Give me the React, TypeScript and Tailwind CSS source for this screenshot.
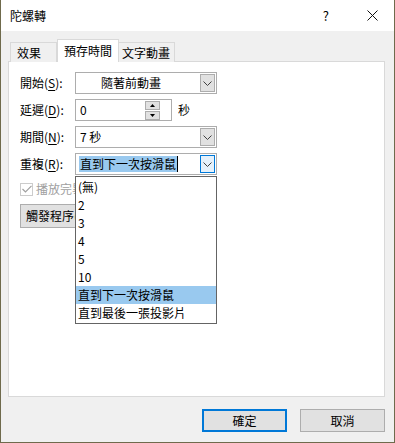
import { ReactNode } from "react";

const font = { fontFamily: '"Noto Sans CJK TC", "Microsoft JhengHei", sans-serif' };

function Chevron({ color = "#404040" }: { color?: string }) {
    return (
        <svg width="9" height="5" viewBox="0 0 9 5">
            <path d="M0.5 0.5 L4.5 4.5 L8.5 0.5" fill="none" stroke={color} strokeWidth="1" />
        </svg>
    );
}

function Label({ text, hot }: { text: string, hot: string }) {
    return (
        <div className="w-[55px] shrink-0 text-[12px] leading-none text-black">
            {text}(<span className="underline underline-offset-2">{hot}</span>):
        </div>
    );
}

function Select({ children, focus }: { children: ReactNode, focus?: boolean }) {
    return (
        <div className="flex items-center w-[142px] h-[22px] border border-[#adadad] bg-white">
            <div className="grow flex items-center h-full overflow-hidden">{children}</div>
            <div
                className={`flex items-center justify-center w-[15px] h-[18px] mr-[1px] border ${focus ? "border-[#0078d7] bg-[#e5f1fb]" : "border-[#adadad] bg-[#e1e1e1]"}`}
            >
                <Chevron />
            </div>
        </div>
    );
}

export default function App() {
    const items = ["(無)", "2", "3", "4", "5", "10", "直到下一次按滑鼠", "直到最後一張投影片"];

    return (
        <div style={font} className="w-[395px] h-[443px] flex flex-col bg-[#f0f0f0] border-x border-b border-[#6f6a4c] overflow-hidden">
            <div className="flex items-center h-[31px] shrink-0 bg-white pl-[9px]">
                <div className="text-[12px] text-black">陀螺轉</div>
                <div className="ml-auto text-[13px] text-black mr-[38px]">?</div>
                <div className="mr-[16px]">
                    <svg width="11" height="11" viewBox="0 0 11 11">
                        <path d="M0.5 0.5 L10.5 10.5 M10.5 0.5 L0.5 10.5" stroke="#111" strokeWidth="1" />
                    </svg>
                </div>
            </div>

            <div className="flex flex-col pl-[7px] pr-[9px] pt-[8px]">
                <div className="flex items-end h-[23px] pl-[2px] -mb-px relative z-10">
                    <div className="flex items-center w-[47px] h-[20px] pl-[6px] bg-[#f0f0f0] border border-b-0 border-[#d9d9d9] text-[12px] text-black">
                        效果
                    </div>
                    <div className="flex items-center w-[62px] h-[23px] pl-[6px] bg-white border border-b-0 border-[#d9d9d9] text-[12px] text-black">
                        預存時間
                    </div>
                    <div className="flex items-center w-[56px] h-[20px] pl-[3px] bg-[#f0f0f0] border border-b-0 border-l-0 border-[#d9d9d9] text-[12px] text-black">
                        文字動畫
                    </div>
                </div>

                <div className="relative h-[336px] bg-white border border-[#d9d9d9] pt-[10px] pl-[11px]">
                    <div className="flex flex-col gap-[5px]">
                        <div className="flex items-center">
                            <Label text="開始" hot="S" />
                            <Select>
                                <span className="pl-[25px] text-[12px] text-black">隨著前動畫</span>
                            </Select>
                        </div>
                        <div className="flex items-center">
                            <Label text="延遲" hot="D" />
                            <div className="flex items-center w-[97px] h-[22px] border border-[#adadad] bg-white">
                                <span className="grow pl-[4px] text-[12px] text-black">0</span>
                                <div className="flex flex-col gap-[1px] mr-[11px]">
                                    <div className="flex items-center justify-center w-[15px] h-[9px] border border-[#adadad] bg-[#e1e1e1]">
                                        <svg width="5" height="3" viewBox="0 0 5 3"><path d="M2.5 0 L5 3 L0 3 Z" fill="#000" /></svg>
                                    </div>
                                    <div className="flex items-center justify-center w-[15px] h-[9px] border border-[#adadad] bg-[#e1e1e1]">
                                        <svg width="5" height="3" viewBox="0 0 5 3"><path d="M0 0 L5 0 L2.5 3 Z" fill="#000" /></svg>
                                    </div>
                                </div>
                            </div>
                            <span className="ml-[6px] text-[12px] text-black">秒</span>
                        </div>
                        <div className="flex items-center">
                            <Label text="期間" hot="N" />
                            <Select>
                                <span className="pl-[4px] text-[12px] text-black">7 秒</span>
                            </Select>
                        </div>
                        <div className="flex items-center">
                            <Label text="重複" hot="R" />
                            <Select focus>
                                <span className="ml-[3px] px-[1px] bg-[#99c9ef] text-[12px] leading-[16px] text-black">直到下一次按滑鼠</span>
                                <span className="w-px h-[16px] bg-black" />
                            </Select>
                        </div>
                    </div>

                    <div className="flex items-center gap-[3px] mt-[7px] h-[14px]">
                        <div className="flex items-center justify-center w-[13px] h-[13px] border border-[#cccccc] bg-white">
                            <svg width="10" height="8" viewBox="0 0 10 8">
                                <path d="M0.5 4 L3.5 7 L9.5 0.8" fill="none" stroke="#a0a0a0" strokeWidth="1.2" />
                            </svg>
                        </div>
                        <span className="text-[12px] text-[#a0a0a0]">播放完畢後倒帶</span>
                    </div>

                    <div className="flex items-center w-[100px] h-[24px] mt-[8px] pl-[5px] border border-[#adadad] bg-[#e1e1e1] text-[12px] text-black">
                        觸發程序(<span className="underline">T</span>)
                    </div>

                    <div className="absolute left-[66px] top-[114px] w-[142px] flex flex-col border border-[#646464] bg-white py-px z-20">
                        {items.map((item, i) => (
                            <div
                                key={item}
                                className={`flex items-center h-[18px] pl-[2px] text-[12px] text-black ${i === 6 ? "bg-[#99c9ef]" : ""}`}
                            >
                                {item}
                            </div>
                        ))}
                    </div>
                </div>

                <div className="flex justify-end gap-[13px] mt-[12px]">
                    <div className="flex items-center justify-center w-[85px] h-[23px] border-2 border-[#0078d7] bg-[#e1e1e1] text-[12px] text-black">
                        確定
                    </div>
                    <div className="flex items-center justify-center w-[85px] h-[23px] border border-[#adadad] bg-[#e1e1e1] text-[12px] text-black">
                        取消
                    </div>
                </div>
            </div>
        </div>
    );
}
